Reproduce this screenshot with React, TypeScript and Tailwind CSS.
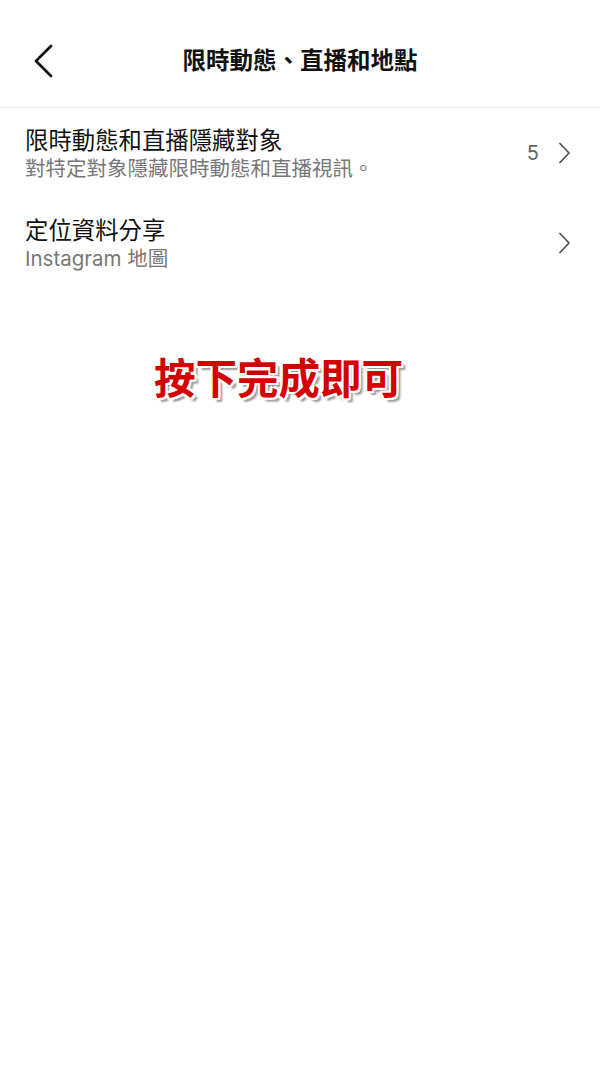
import React from 'react';

const font = { fontFamily: '"Inter", "Noto Sans CJK TC", sans-serif' };

function ChevronRight() {
    return (
        <svg width="14" height="22" viewBox="0 0 14 22" fill="none" className="shrink-0">
            <path d="M3 1.5 L12 11 L3 20.5" stroke="#555" strokeWidth="1.8" strokeLinecap="round" strokeLinejoin="round" />
        </svg>
    );
}

interface RowProps {
    title: string;
    subtitle: string;
    count?: string;
}

function Row({ title, subtitle, count }: RowProps) {
    return (
        <div className="flex items-center justify-between pl-[25px] pr-[29px] pt-[19px] pb-[15px]">
            <div className="flex flex-col">
                <span className="text-[23.4px] leading-[28px] text-[#111]">{title}</span>
                <span className="text-[20.5px] leading-[28px] text-[#777]">{subtitle}</span>
            </div>
            <div className="flex items-center gap-[18px] mb-[4px]">
                {count && <span className="text-[20px] text-[#666]">{count}</span>}
                <ChevronRight />
            </div>
        </div>
    );
}

export default function App() {
    return (
        <div className="w-[600px] h-[1080px] bg-white" style={font}>
            {/* Header */}
            <div className="relative h-[108px] flex items-center justify-center border-b border-[#efefef]">
                <button className="absolute left-[33px] top-[44px]">
                    <svg width="22" height="34" viewBox="0 0 22 34" fill="none">
                        <path d="M18 2 L3 17 L18 32" stroke="#111" strokeWidth="2.8" strokeLinecap="round" strokeLinejoin="round" />
                    </svg>
                </button>
                <h1 className="text-[23.5px] font-bold text-[#111] mt-[14px]">限時動態、直播和地點</h1>
            </div>

            <Row title="限時動態和直播隱藏對象" subtitle="對特定對象隱藏限時動態和直播視訊。" count="5" />
            <Row title="定位資料分享" subtitle="Instagram 地圖" />

            {/* annotation */}
            <div className="flex justify-center mt-[67px] pr-[43px]">
                <span
                    className="text-[41.5px] leading-[48px] font-bold text-[#d40000]"
                    style={{
                        textShadow:
                            '-2px -2px 0 #fff, 2px -2px 0 #fff, -2px 2px 0 #fff, 2px 2px 0 #fff, 0 2px 0 #fff, 2px 0 0 #fff, 4px 4px 2px #999',
                    }}
                >
                    按下完成即可
                </span>
            </div>
        </div>
    );
}
